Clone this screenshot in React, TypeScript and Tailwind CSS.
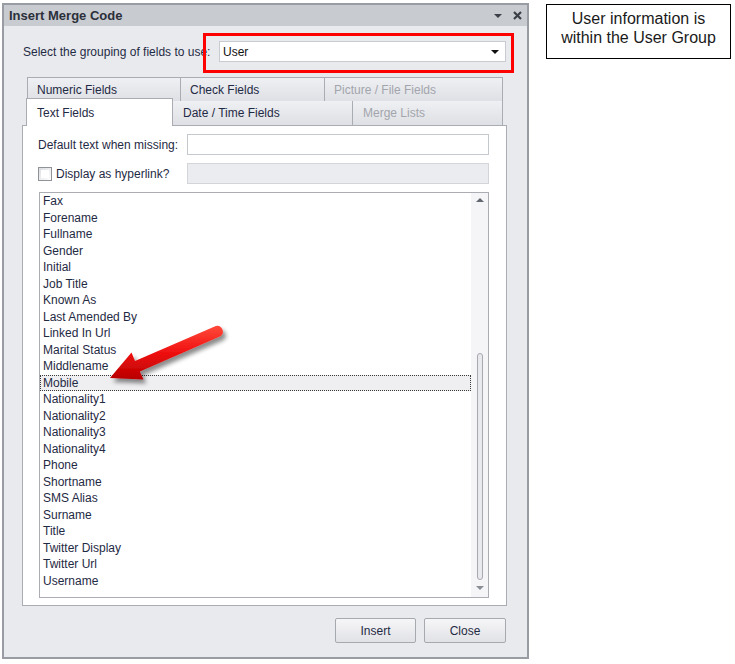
import { type FC } from 'react';

// ============================================================================
// Data
// ============================================================================

const FIELDS = [
  'Fax',
  'Forename',
  'Fullname',
  'Gender',
  'Initial',
  'Job Title',
  'Known As',
  'Last Amended By',
  'Linked In Url',
  'Marital Status',
  'Middlename',
  'Mobile',
  'Nationality1',
  'Nationality2',
  'Nationality3',
  'Nationality4',
  'Phone',
  'Shortname',
  'SMS Alias',
  'Surname',
  'Title',
  'Twitter Display',
  'Twitter Url',
  'Username',
];

const SELECTED = 'Mobile';

// ============================================================================
// Small pieces
// ============================================================================

const TriDown: FC<{ className?: string }> = ({ className }) => (
  <svg width="8" height="4" viewBox="0 0 8 4" className={className}>
    <path d="M0 0h8L4 4z" fill="currentColor" />
  </svg>
);

const TriUp: FC<{ className?: string }> = ({ className }) => (
  <svg width="8" height="4" viewBox="0 0 8 4" className={className}>
    <path d="M0 4h8L4 0z" fill="currentColor" />
  </svg>
);

/** Inactive tab in the back row */
const BackTab: FC<{ label: string; w: string; disabled?: boolean }> = ({ label, w, disabled }) => (
  <div
    className={`${w} -ml-px flex h-[25px] items-center border border-[#a9acb2] bg-gradient-to-b from-[#eff0f3] to-[#dfe0e5] pl-[9px] first:ml-0 ${
      disabled ? 'text-[#a2a5ab]' : 'text-[#1f2a44]'
    }`}
  >
    {label}
  </div>
);

/** Inactive tab in the front row */
const FrontTab: FC<{ label: string; w: string; disabled?: boolean }> = ({ label, w, disabled }) => (
  <div
    className={`${w} -ml-px flex h-[24px] items-center border-x border-[#a9acb2] bg-gradient-to-b from-[#eff0f3] to-[#dfe0e5] pl-[10px] ${
      disabled ? 'text-[#a2a5ab]' : 'text-[#1f2a44]'
    }`}
  >
    {label}
  </div>
);

const RedArrow: FC = () => (
  <svg
    className="pointer-events-none absolute left-[95px] top-[315px]"
    width="140"
    height="85"
    viewBox="0 0 140 85"
  >
    <defs>
      <linearGradient id="arrowFill" x1="0" y1="0" x2="0" y2="1">
        <stop offset="0" stopColor="#ff4a3a" />
        <stop offset="0.5" stopColor="#f01010" />
        <stop offset="1" stopColor="#b80000" />
      </linearGradient>
      <filter id="arrowShadow" x="-20%" y="-20%" width="150%" height="160%">
        <feDropShadow dx="3" dy="4" stdDeviation="2" floodColor="#000" floodOpacity="0.45" />
      </filter>
    </defs>
    <path
      d="M15 63 L36.5 37.5 L40 46 L120.8 10.9 A5.8 5.8 0 0 1 125.4 21.3 L44.8 56.5 L48.5 64.5 Z"
      fill="url(#arrowFill)"
      filter="url(#arrowShadow)"
      strokeLinejoin="round"
    />
  </svg>
);

// ============================================================================
// App
// ============================================================================

const App: FC = () => (
  <div className="relative flex h-[664px] w-[735px] items-start overflow-hidden bg-white font-['Liberation_Sans',Arial,sans-serif] text-[12px] text-[#1f2a44]">
    {/* Dialog */}
    <div className="relative ml-[2px] mt-[3px] flex h-[656px] w-[527px] flex-col border-2 border-[#999ca2] bg-[#e9eaee]">
      {/* Title bar */}
      <div className="flex h-[21px] items-center bg-[#c8cbd0] pl-[5px]">
        <span className="text-[13px] font-bold text-[#2b303b]">Insert Merge Code</span>
        <div className="ml-auto mr-[5px] flex items-center gap-[11px] text-[#3b3f47]">
          <TriDown />
          <svg width="9" height="9" viewBox="0 0 9 9">
            <path d="M1 1L8 8M8 1L1 8" stroke="currentColor" strokeWidth="2.2" />
          </svg>
        </div>
      </div>

      {/* Grouping selector */}
      <div className="mt-[15px] flex h-[21px] items-center">
        <span className="pl-[19px]">Select the grouping of fields to use:</span>
        <div className="ml-auto mr-[21px] flex h-[21px] w-[287px] items-center border border-[#c8cbd0] bg-white pl-[3px] pr-[6px]">
          <span className="text-[#111]">User</span>
          <TriDown className="ml-auto text-[#111]" />
        </div>
      </div>
      <div className="pointer-events-none absolute left-[199px] top-[28px] h-[40px] w-[311px] border-[3px] border-[#ff0000]" />

      {/* Tabs */}
      <div className="ml-[23px] mt-[15px] flex">
        <BackTab label="Numeric Fields" w="w-[154px]" />
        <BackTab label="Check Fields" w="w-[145px]" />
        <BackTab label="Picture / File Fields" w="w-[179px]" disabled />
      </div>
      <div className="ml-[22px] -mt-[4px] flex h-[27px] items-end">
        <div className="relative z-10 -mb-px flex h-[28px] w-[147px] items-center border-x border-t border-[#a9acb2] bg-white pl-[10px]">
          Text Fields
        </div>
        <FrontTab label="Date / Time Fields" w="w-[181px]" />
        <FrontTab label="Merge Lists" w="w-[151px]" disabled />
      </div>

      {/* Tab panel */}
      <div className="ml-[18px] flex h-[481px] w-[485px] flex-col border border-[#a9acb2] bg-white">
        <div className="mt-[8px] flex h-[21px] items-center">
          <span className="w-[164px] pl-[15px]">Default text when missing:</span>
          <div className="h-[21px] w-[302px] border border-[#c5c8cd] bg-white" />
        </div>
        <div className="mt-[8px] flex h-[21px] items-center">
          <div className="flex w-[164px] items-center pl-[15px]">
            <div className="h-[14px] w-[14px] border border-[#8f9398] bg-gradient-to-br from-[#dcdde1] to-white p-[2px]">
              <div className="h-full w-full bg-white" />
            </div>
            <span className="ml-[4px]">Display as hyperlink?</span>
          </div>
          <div className="h-[21px] w-[302px] border border-[#d3d5d9] bg-[#ebecef]" />
        </div>

        {/* Field list */}
        <div className="ml-[16px] mt-[8px] flex h-[406px] w-[450px] border border-[#abadb3] bg-white">
          <div className="flex flex-1 flex-col">
            {FIELDS.map((f) =>
              f === SELECTED ? (
                <div
                  key={f}
                  className="h-[16.5px] border border-dotted border-[#3a3a3a] bg-[#efeff2] pl-[2px] leading-[14.5px]"
                >
                  {f}
                </div>
              ) : (
                <div key={f} className="h-[16.5px] pl-[3px] leading-[16.5px]">
                  {f}
                </div>
              ),
            )}
          </div>
          <div className="relative w-[17px] bg-[#f5f5f7]">
            <TriUp className="absolute left-[5px] top-[5px] text-[#62666e]" />
            <div className="absolute left-[6px] top-[160px] h-[227px] w-[6px] rounded-full border border-[#a6a9af] bg-[#e9e9ed]" />
            <TriDown className="absolute left-[5px] top-[393px] text-[#8a8e95]" />
          </div>
        </div>
      </div>

      {/* Buttons */}
      <div className="mt-[12px] flex justify-end gap-[8px] pr-[21px]">
        <button className="h-[25px] w-[81px] rounded-[2px] border border-[#a6a9ae] bg-gradient-to-b from-[#f6f6f8] to-[#e1e2e6] text-[12px] text-[#1f2a44]">
          Insert
        </button>
        <button className="h-[25px] w-[82px] rounded-[2px] border border-[#a6a9ae] bg-gradient-to-b from-[#f6f6f8] to-[#e1e2e6] text-[12px] text-[#1f2a44]">
          Close
        </button>
      </div>
    </div>

    {/* Callout */}
    <div className="ml-[17px] mt-[4px] flex h-[55px] w-[185px] flex-col items-center justify-center border border-black pb-[8px] text-[16px] leading-[19px] text-[#1a1a1a]">
      <span>User information is</span>
      <span>within the User Group</span>
    </div>

    <RedArrow />
  </div>
);

export default App;
